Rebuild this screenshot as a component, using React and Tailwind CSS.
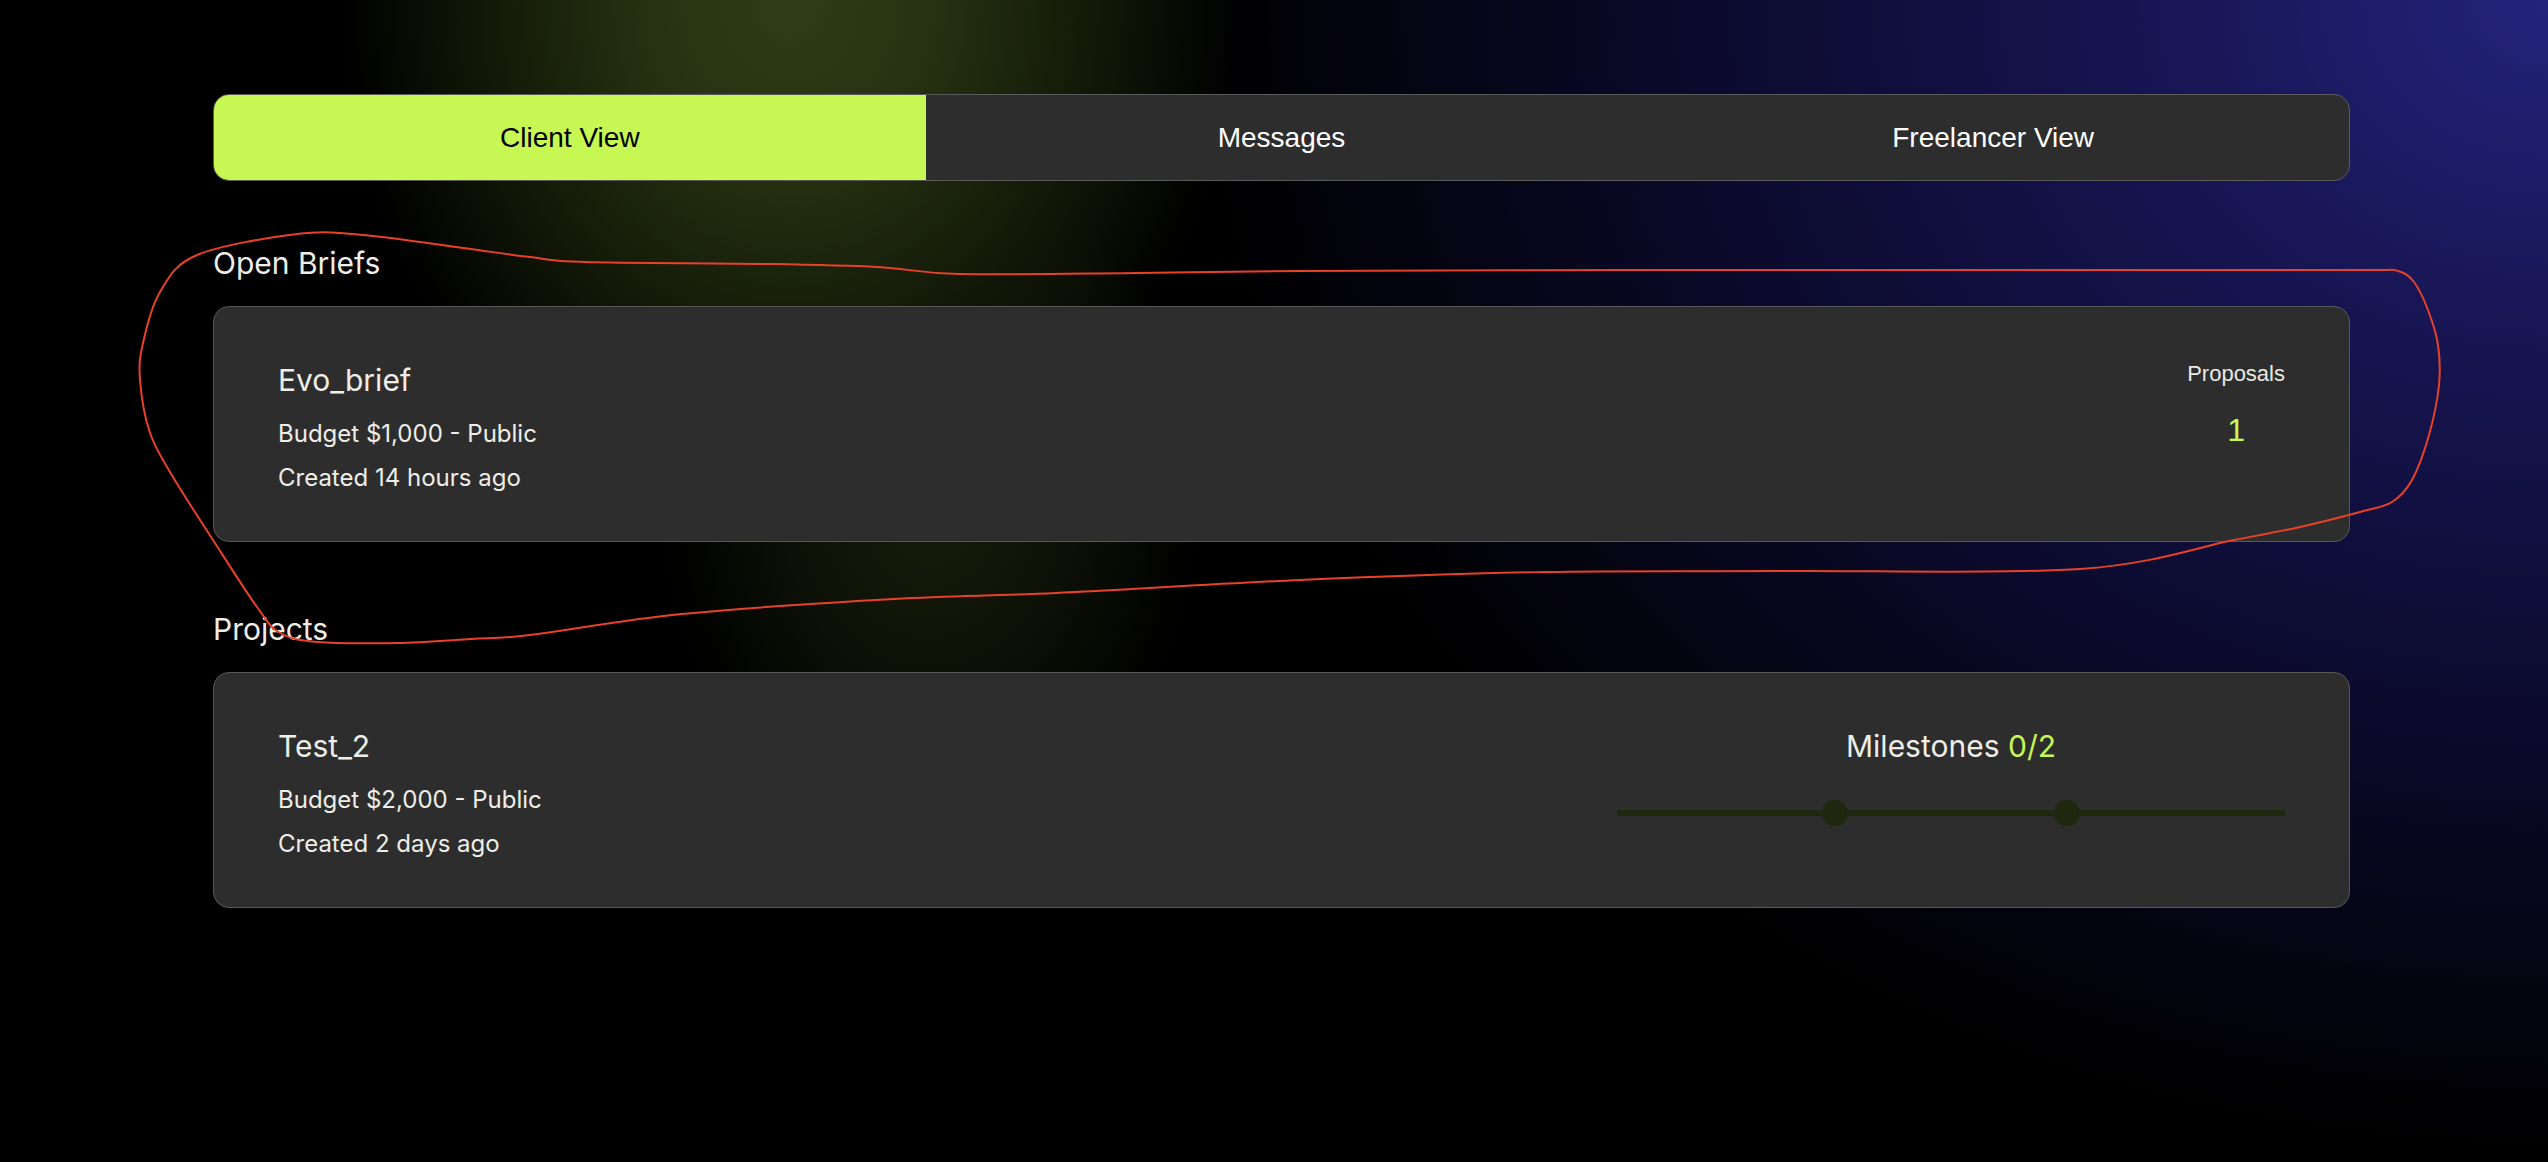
const lime = "text-[#c6f752]";

const briefs = [{ id: "b1", title: "Evo_brief", budget: "$1,000", visibility: "Public", created: "14 hours ago", proposals: 1 }];
const projects = [{ id: "p1", title: "Test_2", budget: "$2,000", visibility: "Public", created: "2 days ago", done: 0, total: 2 }];

// hand-drawn highlight loop on the screenshot, page coordinates
const loop = [
  [297, 234], [363, 235], [463, 248], [530, 257], [585, 262], [764, 264], [877, 267], [959, 274],
  [1137, 273], [1300, 271], [1625, 270], [1950, 270], [2200, 270], [2370, 270], [2398, 271],
  [2414, 282], [2428, 310], [2438, 345], [2439, 385], [2429, 435], [2412, 480], [2392, 502],
  [2360, 512], [2300, 527], [2234, 540], [2080, 569], [1787, 571], [1544, 572], [1300, 580],
  [1056, 593], [894, 599], [682, 614], [530, 635], [471, 639], [397, 643], [317, 642],
  [280, 633], [257, 607], [213, 540], [173, 477], [150, 433], [140, 380], [143, 343],
  [160, 292], [197, 255],
];

const smoothPath = (pts) => {
  const n = pts.length;
  let d = `M${pts[0][0]},${pts[0][1]}`;
  for (let i = 0; i < n; i++) {
    const p0 = pts[(i - 1 + n) % n];
    const p1 = pts[i];
    const p2 = pts[(i + 1) % n];
    const p3 = pts[(i + 2) % n];
    const c1 = [p1[0] + (p2[0] - p0[0]) / 6, p1[1] + (p2[1] - p0[1]) / 6];
    const c2 = [p2[0] - (p3[0] - p1[0]) / 6, p2[1] - (p3[1] - p1[1]) / 6];
    d += ` C${c1[0]},${c1[1]} ${c2[0]},${c2[1]} ${p2[0]},${p2[1]}`;
  }
  return d;
};

const tabs = ["Client View", "Messages", "Freelancer View"];

function Meta({ item }) {
  return (
    <div className="flex flex-col">
      <h3 className="text-[30px] leading-9 mb-5">{item.title}</h3>
      <p className="text-[24px] leading-8 mb-3">
        Budget {item.budget} - {item.visibility}
      </p>
      <p className="text-[24px] leading-8">Created {item.created}</p>
    </div>
  );
}

function Card({ children }) {
  return (
    <div className="bg-[#2d2d2d] border border-[#575757] rounded-[16px] px-16 pt-[55px] pb-[47px] flex justify-between items-start">
      {children}
    </div>
  );
}

function Milestones({ done, total }) {
  const dots = Array.from({ length: total }, (_, i) => i);
  return (
    <div className="w-[668px] flex flex-col items-center">
      <p className="text-[30px] leading-9">
        Milestones <span className={lime}>{done}/{total}</span>
      </p>
      <div className="w-full h-[26px] mt-9 flex items-center">
        <div className="h-[6px] flex-1 bg-[#1f280e]" />
        {dots.map((i) => (
          <div key={i} className="contents">
            <div className="w-[26px] h-[26px] rounded-full bg-[#1f280e] shrink-0" />
            <div className="h-[6px] flex-1 bg-[#1f280e]" />
          </div>
        ))}
      </div>
    </div>
  );
}

export default function App() {
  return (
    <div className="relative min-h-screen w-full overflow-hidden bg-black bg-[radial-gradient(ellipse_1350px_1150px_at_100%_0%,#23237c_0%,#171552_30%,#0c0b30_60%,transparent_100%),radial-gradient(ellipse_450px_520px_at_790px_0px,#313d18_0%,#243010_35%,#111707_70%,transparent_100%),radial-gradient(ellipse_270px_340px_at_930px_500px,#171e0b_0%,#0c1006_55%,transparent_100%)] font-['Inter',sans-serif] text-[#eeede8]">
      <div className="ml-[213px] w-[2137px] pt-[94px] pb-20">
        <div className="grid grid-cols-3 h-[87px] rounded-[16px] border border-[#5a5a5a] bg-[#2d2d2d] overflow-hidden font-['Liberation_Sans',Arial,sans-serif] text-[28px]">
          {tabs.map((t, i) => (
            <button
              key={t}
              className={i === 0 ? "bg-[#c6f752] text-black flex items-center justify-center" : "text-white flex items-center justify-center"}
            >
              {t}
            </button>
          ))}
        </div>

        <h2 className="text-[30px] leading-9 mt-[64px] mb-[25px]">Open Briefs</h2>
        {briefs.map((b) => (
          <Card key={b.id}>
            <Meta item={b} />
            <div className="flex flex-col items-center -mt-[2px] font-['Liberation_Sans',Arial,sans-serif]">
              <p className="text-[22px] leading-7 text-[#e8e8e4]">Proposals</p>
              <p className={`text-[32px] leading-9 mt-6 ${lime}`}>{b.proposals}</p>
            </div>
          </Card>
        ))}

        <h2 className="text-[30px] leading-9 mt-[69px] mb-[25px]">Projects</h2>
        {projects.map((p) => (
          <Card key={p.id}>
            <Meta item={p} />
            <Milestones done={p.done} total={p.total} />
          </Card>
        ))}
      </div>

      <svg className="absolute left-0 top-0 pointer-events-none" width="2548" height="1162" viewBox="0 0 2548 1162" fill="none">
        <path d={smoothPath(loop)} stroke="#e8412a" strokeWidth="2" strokeLinecap="round" strokeLinejoin="round" />
      </svg>
    </div>
  );
}
